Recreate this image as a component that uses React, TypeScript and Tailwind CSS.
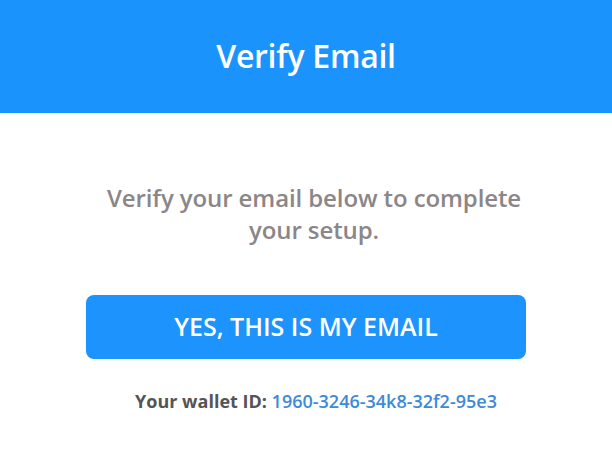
export default function App() {
  return (
    <div className="w-[612px] h-[460px] bg-white font-['Open_Sans',sans-serif] flex flex-col">
      {/* title bar */}
      <header className="h-[113px] bg-[#1b93fd] flex items-center justify-center">
        <h1 className="text-white text-[32px] font-semibold tracking-[-0.3px] leading-none pb-[2px]">
          Verify Email
        </h1>
      </header>

      <main className="flex flex-col items-center">
        <p className="mt-[69px] ml-4 w-[424px] text-center text-[24px] leading-[32px] font-semibold text-[#8b8687] tracking-[-0.1px]">
          Verify your email below to complete your setup.
        </p>

        <button className="mt-[49px] w-[440px] h-[64px] rounded-[8px] bg-[#1c93fd] text-white text-[25px] font-semibold">
          YES, THIS IS MY EMAIL
        </button>

        <p className="mt-[30px] ml-5 text-[18px] leading-[24px] font-semibold">
          <span className="text-[#555456] font-bold">Your wallet ID: </span>
          <span className="text-[#3d8ad8]">1960-3246-34k8-32f2-95e3</span>
        </p>
      </main>
    </div>
  );
}
